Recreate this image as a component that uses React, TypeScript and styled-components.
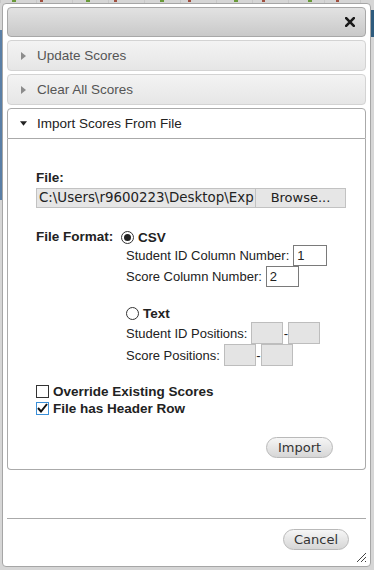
import React from 'react'
import styled, { createGlobalStyle } from 'styled-components'

const GlobalStyle = createGlobalStyle`
  html, body {
    margin: 0;
    padding: 0;
  }
  body {
    font-family: "Liberation Sans", Arial, sans-serif;
    background: #dcdcdc;
  }
  * {
    box-sizing: border-box;
  }
`

const Page = styled.div`
  width: 374px;
  height: 570px;
  padding: 3px 3px 3px 2px;
  background:
    linear-gradient(#2e5b7d, #2e5b7d) right 10px / 3px 27px no-repeat,
    repeating-linear-gradient(90deg, #c8c8c8 0 1px, transparent 1px 36px) left top / 100% 3px no-repeat,
    repeating-linear-gradient(90deg, transparent 0 12px, #6a9a3a 12px 16px, transparent 16px 40px, #a05040 40px 43px, transparent 43px 74px) left top / 100% 2px no-repeat,
    linear-gradient(#5a7fa6, #5a7fa6) left 30px / 2px 170px no-repeat,
    #d6d6d6;
`

const Dialog = styled.div`
  position: relative;
  width: 369px;
  height: 564px;
  border: 1px solid #a6a6a6;
  border-radius: 4px;
  background: #ffffff;
  padding: 0 4px 3px 4px;
  display: flex;
  flex-direction: column;
`

const TitleBar = styled.div`
  margin-top: 3px;
  height: 30px;
  border: 1px solid #a8a8a8;
  border-radius: 4px;
  background: linear-gradient(#e2e2e2, #c9c9c9);
  display: flex;
  align-items: center;
  justify-content: flex-end;
  padding-right: 9px;
`

const CloseButton = styled.span`
  display: flex;
  width: 12px;
  height: 12px;
  align-items: center;
  justify-content: center;
`

const Accordion = styled.div`
  margin-top: 3px;
  display: flex;
  flex-direction: column;
  gap: 3px;
`

const Header = styled.div<{ active?: boolean }>`
  height: 31px;
  display: flex;
  align-items: center;
  padding-left: 12px;
  gap: 10px;
  font-size: 13.5px;
  color: ${p => (p.active ? '#222222' : '#555555')};
  border: 1px solid ${p => (p.active ? '#aaaaaa' : '#d3d3d3')};
  border-radius: ${p => (p.active ? '4px 4px 0 0' : '4px')};
  background: ${p => (p.active ? '#ffffff' : 'linear-gradient(#f3f3f3, #e6e6e6)')};
`

const Arrow = styled.span`
  width: 7px;
  display: flex;
  justify-content: center;
`

const Panel = styled.div`
  height: 331px;
  border: 1px solid #aaaaaa;
  border-top: 0;
  border-radius: 0 0 4px 4px;
  padding: 31px 32px 11px 28px;
  display: flex;
  flex-direction: column;
  font-size: 13px;
  color: #222222;
`

const BoldLabel = styled.div`
  font-weight: bold;
  height: 16px;
  line-height: 16px;
  font-size: 13.5px;
  white-space: nowrap;
`

const FileBox = styled.div`
  margin-top: 2px;
  width: 310px;
  height: 20px;
  display: flex;
  border: 1px solid #c2c2c2;
  background: #e6e6e6;
  font-family: "DejaVu Sans", Verdana, sans-serif;
  font-size: 13px;
  color: #222;
`

const PathText = styled.div`
  width: 218px;
  overflow: hidden;
  white-space: nowrap;
  padding-left: 2px;
  line-height: 18px;
  font-size: 13.4px;
  text-overflow: clip;
`

const BrowseButton = styled.div`
  flex: 1;
  border-left: 1px solid #c2c2c2;
  text-align: center;
  line-height: 18px;
`

const FormatRow = styled.div`
  margin-top: 21px;
  height: 16px;
  display: flex;
  align-items: center;
`

const FormatLabel = styled(BoldLabel)`
  width: 85px;
`

const RadioOption = styled.div<{ top?: number }>`
  display: flex;
  align-items: center;
  gap: 4px;
  height: 16px;
  margin-top: ${p => p.top ?? 0}px;
  font-weight: bold;
  font-size: 13.5px;
`

const RadioCircle = styled.span<{ checked?: boolean }>`
  width: 13px;
  height: 13px;
  border: 1px solid #333;
  border-radius: 50%;
  background: #fff;
  display: flex;
  align-items: center;
  justify-content: center;
  &::after {
    content: '';
    width: 7px;
    height: 7px;
    border-radius: 50%;
    background: ${p => (p.checked ? '#222' : 'transparent')};
  }
`

const OptionBlock = styled.div`
  margin-left: 90px;
  display: flex;
  flex-direction: column;
`

const FieldRow = styled.div<{ h: number; top?: number }>`
  height: ${p => p.h}px;
  margin-top: ${p => p.top ?? 0}px;
  display: flex;
  align-items: center;
  white-space: nowrap;
`

const FieldLabel = styled.span`
  margin-right: 4px;
`

const NumberBox = styled.span<{ w: number }>`
  width: ${p => p.w}px;
  height: 21px;
  border: 1px solid #7a7a7a;
  background: #fff;
  padding-left: 3px;
  line-height: 19px;
`

const PosBox = styled.span`
  width: 32px;
  height: 22px;
  border: 1px solid #bdbdbd;
  background: #e4e4e4;
`

const Dash = styled.span`
  width: 5px;
  text-align: center;
`

const CheckRow = styled.div<{ top: number }>`
  height: 16px;
  margin-top: ${p => p.top}px;
  display: flex;
  align-items: center;
  gap: 4px;
  font-weight: bold;
  font-size: 13.5px;
`

const CheckBox = styled.span<{ checked?: boolean }>`
  width: 13px;
  height: 13px;
  border: 1px solid ${p => (p.checked ? '#3a8fd8' : '#333')};
  background: #fff;
  display: flex;
  align-items: center;
  justify-content: center;
`

const ButtonRow = styled.div<{ top: number }>`
  margin-top: ${p => p.top}px;
  display: flex;
  justify-content: flex-end;
`

const PillButton = styled.div<{ w: number }>`
  width: ${p => p.w}px;
  height: 21px;
  border: 1px solid #b9b9b9;
  border-radius: 11px;
  background: linear-gradient(#f6f6f6, #d6d6d6);
  font-family: "DejaVu Sans", Verdana, sans-serif;
  font-size: 13px;
  color: #333333;
  text-align: center;
  line-height: 19px;
`

const Spacer = styled.div`
  flex: 1;
`

const ButtonPane = styled.div`
  height: 45px;
  border-top: 1px solid #aaaaaa;
  padding: 10px 17px 0 0;
  display: flex;
  justify-content: flex-end;
  align-items: flex-start;
`

const Grip = styled.span`
  position: absolute;
  right: 3px;
  bottom: 3px;
  width: 12px;
  height: 12px;
  display: flex;
`

function TriangleRight() {
  return (
    <svg width="5" height="8" viewBox="0 0 5 8">
      <path d="M0 0 L5 4 L0 8 Z" fill="#8c8c8c" />
    </svg>
  )
}

function TriangleDown() {
  return (
    <svg width="8" height="5" viewBox="0 0 8 5">
      <path d="M0 0 L8 0 L4 5 Z" fill="#222" />
    </svg>
  )
}

function App() {
  return (
    <Page>
      <GlobalStyle />
      <Dialog>
        <TitleBar>
          <CloseButton>
            <svg width="10" height="10" viewBox="0 0 10 10">
              <path d="M1.2 1.2 L8.8 8.8 M8.8 1.2 L1.2 8.8" stroke="#1a1a1a" strokeWidth="2.6" strokeLinecap="square" />
            </svg>
          </CloseButton>
        </TitleBar>

        <Accordion>
          <Header>
            <Arrow><TriangleRight /></Arrow>
            Update Scores
          </Header>
          <Header>
            <Arrow><TriangleRight /></Arrow>
            Clear All Scores
          </Header>
          <div>
            <Header active>
              <Arrow><TriangleDown /></Arrow>
              Import Scores From File
            </Header>
            <Panel>
              <BoldLabel>File:</BoldLabel>
              <FileBox>
                <PathText>C:\Users\r9600223\Desktop\Exp</PathText>
                <BrowseButton>Browse...</BrowseButton>
              </FileBox>

              <FormatRow>
                <FormatLabel>File Format:</FormatLabel>
                <RadioOption>
                  <RadioCircle checked />
                  CSV
                </RadioOption>
              </FormatRow>
              <OptionBlock>
                <FieldRow h={21}>
                  <FieldLabel>Student ID Column Number:</FieldLabel>
                  <NumberBox w={34}>1</NumberBox>
                </FieldRow>
                <FieldRow h={21}>
                  <FieldLabel>Score Column Number:</FieldLabel>
                  <NumberBox w={33}>2</NumberBox>
                </FieldRow>
                <RadioOption top={18}>
                  <RadioCircle />
                  Text
                </RadioOption>
                <FieldRow h={22} top={1}>
                  <FieldLabel>Student ID Positions:</FieldLabel>
                  <PosBox />
                  <Dash>-</Dash>
                  <PosBox />
                </FieldRow>
                <FieldRow h={22}>
                  <FieldLabel>Score Positions:</FieldLabel>
                  <PosBox />
                  <Dash>-</Dash>
                  <PosBox />
                </FieldRow>
              </OptionBlock>

              <CheckRow top={17}>
                <CheckBox />
                Override Existing Scores
              </CheckRow>
              <CheckRow top={1}>
                <CheckBox checked>
                  <svg width="11" height="10" viewBox="0 0 11 10">
                    <path d="M1 5 L4 8.5 L10 1" stroke="#111" strokeWidth="2" fill="none" />
                  </svg>
                </CheckBox>
                File has Header Row
              </CheckRow>

              <ButtonRow top={21}>
                <PillButton w={67}>Import</PillButton>
              </ButtonRow>
            </Panel>
          </div>
        </Accordion>

        <Spacer />
        <ButtonPane>
          <PillButton w={66}>Cancel</PillButton>
        </ButtonPane>
        <Grip>
          <svg width="12" height="12" viewBox="0 0 12 12">
            <path d="M11 2 L2 11 M11 6 L6 11 M11 10 L10 11" stroke="#444" strokeWidth="1" />
          </svg>
        </Grip>
      </Dialog>
    </Page>
  )
}

export default App
